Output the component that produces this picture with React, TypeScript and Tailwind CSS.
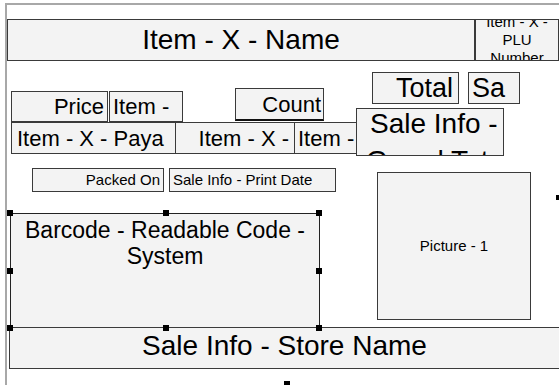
import React from "react";

type BoxProps = {
  className: string;
  wrap?: boolean;
  children?: React.ReactNode;
};

// one field on the label canvas
const Box = ({ className, wrap = false, children }: BoxProps) => (
  <div
    className={`absolute flex overflow-hidden border border-[#3a3a3a] bg-[#f3f3f3] text-black ${
      wrap ? "whitespace-normal" : "whitespace-nowrap"
    } ${className}`}
  >
    {children}
  </div>
);

const Handle = ({ className }: { className: string }) => (
  <div className={`absolute h-[6px] w-[6px] bg-black ${className}`} />
);

const App = () => {
  return (
    <div className="relative h-[385px] w-[559px] overflow-hidden bg-white font-['Liberation_Sans',Arial,sans-serif]">
      {/* design surface edge */}
      <div className="absolute left-[5px] top-[3px] right-0 bottom-0 border-l-2 border-t-2 border-[#a8a8a8]" />

      {/* header row */}
      <Box className="left-[7px] top-[19px] h-[42px] w-[468px] items-center justify-center border-[#2e2e2e] text-[28px]">
        Item - X - Name
      </Box>
      <Box className="left-[475px] top-[19px] h-[42px] w-[84px] items-center justify-center border-[#2e2e2e] text-center text-[15px] leading-[18px]">
        <div>
          Item - X -
          <br />
          PLU
          <br />
          Number
        </div>
      </Box>

      {/* price / count */}
      <Box className="left-[11px] top-[91px] h-[31px] w-[97px] items-center justify-end pr-[3px] text-[22px]">
        Price
      </Box>
      <Box className="left-[109px] top-[91px] h-[31px] w-[74px] items-center pl-[3px] text-[22px]">
        Item -
      </Box>
      <Box className="left-[235px] top-[88px] h-[33px] w-[89px] items-center justify-end border-b-2 border-b-[#111] pr-[2px] text-[22px]">
        Count
      </Box>
      <Box className="left-[11px] top-[122px] h-[32px] w-[165px] items-center pl-[5px] text-[22px]">
        Item - X - Paya
      </Box>
      <Box className="left-[175px] top-[122px] h-[32px] w-[120px] items-center justify-end pr-[5px] text-[22px]">
        Item - X -
      </Box>
      <Box className="left-[294px] top-[122px] h-[32px] w-[68px] items-center pl-[3px] text-[22px]">
        Item -
      </Box>

      {/* totals */}
      <Box className="left-[372px] top-[72px] h-[32px] w-[87px] items-center justify-end pr-[5px] text-[27px]">
        Total
      </Box>
      <Box className="left-[468px] top-[72px] h-[32px] w-[52px] items-center pl-[3px] text-[27px]">
        Sa
      </Box>
      <Box className="left-[356px] top-[108px] h-[48px] w-[148px] flex-col pl-[13px] text-[28px] leading-[30px]">
        <div>Sale Info -</div>
        <div className="mt-[7px] -ml-[4px]">Grand Total</div>
      </Box>

      {/* dates */}
      <Box className="left-[32px] top-[168px] h-[24px] w-[132px] items-center justify-end pr-[3px] text-[15px]">
        Packed On
      </Box>
      <Box className="left-[169px] top-[168px] h-[24px] w-[167px] items-center pl-[3px] text-[15px]">
        Sale Info - Print Date
      </Box>

      {/* barcode (selected) */}
      <Box
        wrap
        className="left-[10px] top-[213px] h-[116px] w-[310px] justify-center border-[#222] px-[6px] pt-[3px] text-center text-[23px] leading-[26px]"
      >
        Barcode - Readable Code - System
      </Box>

      <Box className="left-[377px] top-[172px] h-[148px] w-[154px] items-center justify-center text-[15px]">
        Picture - 1
      </Box>

      <Box className="left-[9px] top-[327px] h-[42px] w-[551px] items-center justify-center pb-[5px] text-[28px]">
        Sale Info - Store Name
      </Box>

      {/* selection handles */}
      <Handle className="left-[7px] top-[210px]" />
      <Handle className="left-[163px] top-[210px]" />
      <Handle className="left-[316px] top-[210px]" />
      <Handle className="left-[7px] top-[268px]" />
      <Handle className="left-[316px] top-[268px]" />
      <Handle className="left-[7px] top-[325px]" />
      <Handle className="left-[163px] top-[325px]" />
      <Handle className="left-[316px] top-[325px]" />

      {/* handles of objects outside the visible area */}
      <div className="absolute left-[556px] top-[195px] h-[5px] w-[3px] bg-black" />
      <div className="absolute left-[284px] top-[381px] h-[4px] w-[6px] bg-black" />
    </div>
  );
};

export default App;
